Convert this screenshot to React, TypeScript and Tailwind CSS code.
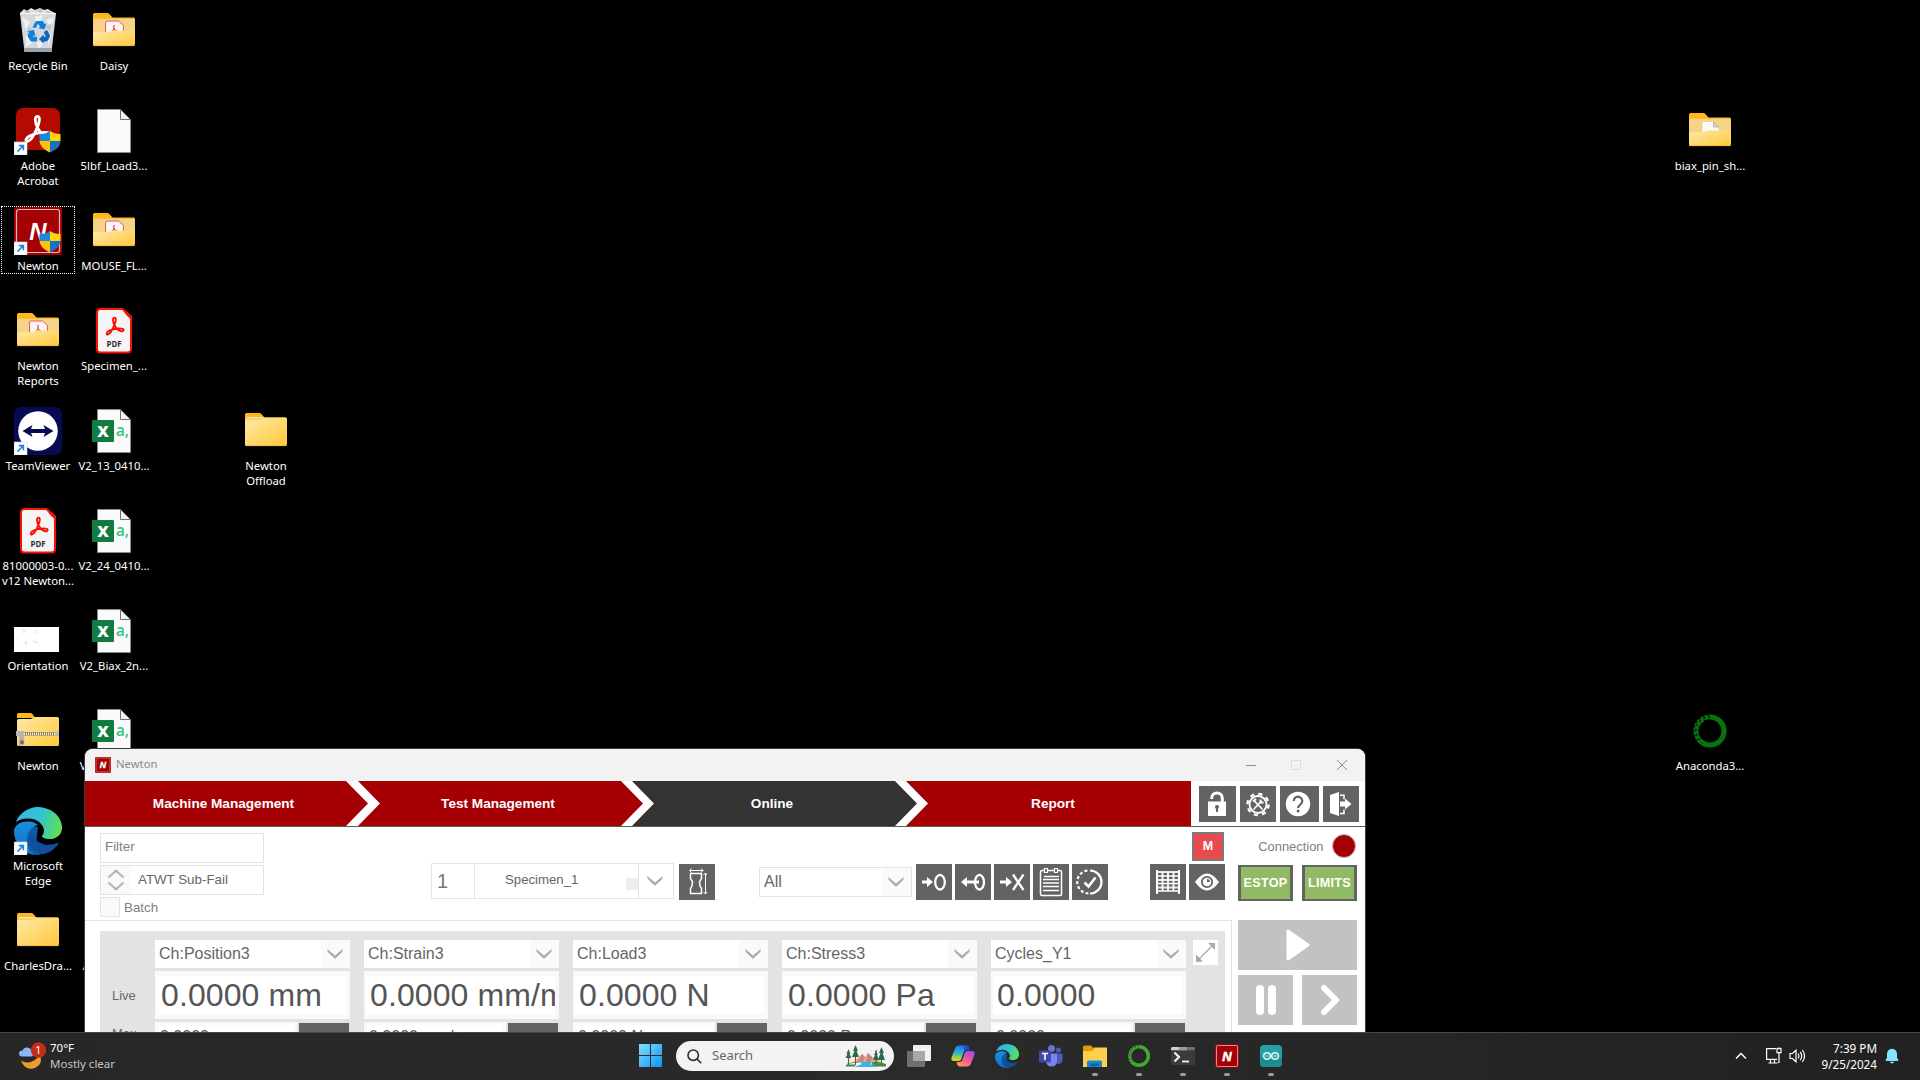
import React, { type ReactNode } from "react";

const UI = "font-['Noto_Sans',sans-serif]";
const ARIAL = "font-['Liberation_Sans',Arial,sans-serif]";

/* ---------- shared marks ---------- */

const ACROBAT =
  "M12 3.5c-2.2 0-1.6 4.3 0 7.3 1.4 2.7 3.8 5.2 6.6 5.7 2.3.3 3.2-2.2.2-2.5-4-.5-8.300.4-11.600 2-3.300 1.600-3.200 4-1.600 3.700 2.200-.5 4.600-4.900 6.100-8.700C13 8.200 14.200 3.500 12 3.500z";

function AcrobatMark({ x, y, size, color, width }: { x: number; y: number; size: number; color: string; width: number }) {
  return (
    <svg x={x} y={y} width={size} height={size} viewBox="2 2 20 20">
      <path d={ACROBAT} fill="none" stroke={color} strokeWidth={width} strokeLinejoin="round" />
    </svg>
  );
}

function Shield() {
  return (
    <g>
      <path d="M36 24c-3 2.300-6.500 3.200-10.500 3v7H36z" fill="#1a8ad8" />
      <path d="M36 24c3 2.300 6.500 3.200 10.500 3v7H36z" fill="#ffd60a" />
      <path d="M25.500 34H36v11.500C30 43 26 39 25.500 34z" fill="#ffc20a" />
      <path d="M46.500 34H36v11.500C42 43 46 39 46.500 34z" fill="#1573c4" />
    </g>
  );
}

function Shortcut() {
  return (
    <g>
      <rect x="0" y="35" width="13" height="13" fill="#fdfdfd" stroke="#cfd6dc" strokeWidth=".6" />
      <path d="M3.500 44.500 9 39M4.800 38.600h4.600v4.600" fill="none" stroke="#1487d9" strokeWidth="1.600" />
    </g>
  );
}

function Box({ children }: { children: ReactNode }) {
  return (
    <svg width="48" height="48" viewBox="0 0 48 48" className="block size-12 shrink-0">
      {children}
    </svg>
  );
}

/* ---------- desktop icons ---------- */

function RecycleBin() {
  return (
    <Box>
      <path d="M6 6 10 2l3 2 4-3 4 2 5-2 4 2 4-1 3 2 4 2-2 6H8z" fill="#dfe3e6" />
      <path d="m10 5 4-2 3 4zm12-2 5 3 2-4zm10 1 5 1-3 4z" fill="#b9c0c5" />
      <path d="M6 6.500h36L37.500 45H10.500z" fill="#d3d8dc" />
      <path d="m8 10 8 5-4 8zm12 0 9-2-4 10zm12 3 8-3-3 12zM12 28l6 8-6 4zm10 6 8 2-5 6zm11-6 4-2-2 14z" fill="#eef1f3" />
      <path d="m14 20 7 4-8 4zm18 0 6-4-2 8z" fill="#bcc4ca" />
      <path d="M6 6.500h36" stroke="#f6f8f9" strokeWidth="1" />
      <path d="M10.200 41h27.600l-.5 4H10.600z" fill="#9aa3aa" />
      <g fill="#0f7fd8">
        <path d="M18.500 20.500 21 15.500q.8-1.500 2.500-1.500h4q1.500 0 2.300 1.400l1 1.800 1.700-1-2 6.300-6.300-1.400 1.900-1.100-2-3.400-2.400 4.400z" />
        <path d="m33 23 2.600 4.600q.8 1.500-.1 3l-1.300 2.400q-.8 1.400-2.400 1.400h-2v2L25 32l4.800-4.400v2.100h2l-2-4.600z" fill="#1167bd" />
        <path d="M23 29.700v4.800h-4.600q-1.600 0-2.500-1.500l-1.700-3q-.8-1.400 0-2.800l1-1.700-1.800-1 6.400-1.600 1.800 6.300-1.800-1-1 1.500z" />
      </g>
    </Box>
  );
}

function FolderBase({ open }: { open?: ReactNode }) {
  return (
    <Box>
      <defs>
        <linearGradient id="fold" x1="0" y1="0" x2="1" y2="1">
          <stop offset="0" stopColor="#ffe9a8" />
          <stop offset="1" stopColor="#ffc83a" />
        </linearGradient>
      </defs>
      <path d="M3 7.500Q3 6 4.500 6h13q1 0 1.800.9L22.500 10.500H43.500q1.500 0 1.500 1.500v14H3z" fill="#fcb81c" />
      {open ? (
        <g>
          <rect x="3.300" y="11.800" width="41.500" height="20" rx="1" fill="#f5d488" />
          {open}
          <path d="M3 26Q3 25 4.500 25h14l4-1.500H43.500q1.500 0 1.500 1V37q0 2-1.500 2H4.500Q3 39 3 37.500z" fill="url(#fold)" />
        </g>
      ) : (
        <g>
          <path d="M4 11.500h15.500l2-1.200H5z" fill="#eef3f8" />
          <path d="M3 14q0-1.500 1.500-1.500h14l3.500-2H43.500q1.500 0 1.500 1.500v25q0 2-1.500 2H4.500Q3 39 3 37.500z" fill="url(#fold)" />
        </g>
      )}
      <path d="M3.500 38.700h41" stroke="#e8ad2e" strokeWidth=".7" />
    </Box>
  );
}

const Folder = () => <FolderBase />;

const PdfFolder = () => (
  <FolderBase
    open={
      <g>
        <path d="M15.500 30V16q0-2 2-2h11l5 4.500V30z" fill="#f6f5f5" stroke="#f2564d" strokeWidth="1" />
        <path d="M24 18v3.500q0 1.500-2 3M24 21.500q.8 2 3 2.500" fill="none" stroke="#e8403a" strokeWidth="1.200" />
      </g>
    }
  />
);

const PageFolder = () => (
  <FolderBase
    open={
      <g>
        <path d="M16.500 30V15h11l5 5v10z" fill="#fafafa" />
        <path d="M27.500 15v5h5z" fill="#d5d5d5" stroke="#888" strokeWidth=".5" />
      </g>
    }
  />
);

function ZipFolder() {
  return (
    <Box>
      <path d="M3 7.500Q3 6 4.500 6h12q1 0 1.800.9L21.500 11H3z" fill="#fcb81c" />
      <path d="M3 13.500q0-1.500 1.500-1.500h12.500l4-2H43.500q1.500 0 1.500 1.500v26q0 1.500-1.500 1.500H4.500Q3 39 3 37.500z" fill="url(#fold)" />
      <path d="M8 26.700h36" stroke="#8b7f60" strokeWidth="3.600" />
      <path d="M8 26.700h36" stroke="#f0ead8" strokeWidth="2.600" strokeDasharray="1 1" />
      <rect x="41" y="24.500" width="4" height="4.500" fill="#b9b9b9" />
      <path d="M2 24h8v5l.5 9.500h-6L5 29H2z" fill="#b4b4b4" />
      <rect x="6.500" y="33.500" width="3" height="3.500" fill="#7a6322" />
    </Box>
  );
}

function AdobeApp() {
  return (
    <Box>
      <rect x="2" y="1" width="44" height="42" rx="7" fill="#b30b00" />
      <AcrobatMark x={8} y={7} size={31} color="#fff" width={1.800} />
      <Shield />
      <Shortcut />
    </Box>
  );
}

function NewtonApp() {
  return (
    <Box>
      <rect width="48" height="48" rx="2.500" fill="#a50003" />
      <rect x="2.500" y="2.500" width="43" height="43" rx="2.500" fill="none" stroke="#e3b9ba" strokeWidth="1.200" />
      <text x="24" y="33" textAnchor="middle" fontFamily="Liberation Sans" fontWeight="700" fontStyle="italic" fontSize="24" fill="#fff">
        N
      </text>
      <Shield />
      <Shortcut />
    </Box>
  );
}

function TeamViewer() {
  return (
    <Box>
      <rect width="48" height="48" rx="6.500" fill="#050a52" />
      <circle cx="24" cy="24" r="19.800" fill="#fff" />
      <path d="m8.500 24 10-6-1.500 4h14l-1.500-4 10 6-10 6 1.500-4H17l1.500 4z" fill="#050a52" />
      <Shortcut />
    </Box>
  );
}

function PdfFile() {
  return (
    <Box>
      <path d="M7 5.500Q7 2 10.500 2h22L41 9.500V42q0 3.500-3.500 3.500h-27Q7 45.500 7 42z" fill="#f6f5f5" stroke="#fa1105" strokeWidth="2" />
      <path d="M32 2h2L41 9v3q-4-2-9-10z" fill="#fa1105" />
      <AcrobatMark x={14} y={9} size={21} color="#fa1105" width={1.800} />
      <text x="24" y="39.500" textAnchor="middle" fontFamily="Open Sans" fontWeight="700" fontSize="8.500" textLength="15" lengthAdjust="spacingAndGlyphs" fill="#2c2c2c">
        PDF
      </text>
    </Box>
  );
}

function Page() {
  return (
    <g>
      <path d="M7.500 2.500H30.500l10 10V45.500h-33z" fill="#fafafa" stroke="#8a8a8a" />
      <path d="M30.500 2.500v10h10z" fill="#f1f1f1" stroke="#6e6e6e" />
    </g>
  );
}

const BlankFile = () => (
  <Box>
    <Page />
  </Box>
);

const CsvFile = () => (
  <Box>
    <Page />
    <rect x="2" y="13" width="22" height="22" rx="1" fill="#107c41" />
    <text x="13" y="30" textAnchor="middle" fontFamily="Open Sans" fontWeight="800" fontSize="16" fill="#fff">
      X
    </text>
    <text x="26" y="29" fontFamily="Open Sans" fontWeight="600" fontSize="17" textLength="13" lengthAdjust="spacingAndGlyphs" fill="#33c481">
      a,
    </text>
  </Box>
);

const Thumbnail = () => (
  <Box>
    <rect x="0" y="20" width="45" height="25" fill="#fff" />
    <path d="m8 22 4 4m0-4-3 4m12-3 3 1m-4 2 2-1" stroke="#d8d4ee" strokeWidth=".8" />
    <path d="m9 36 4-2m-1 4 1-3m6-1 5 2" stroke="#f0c8d0" strokeWidth=".8" />
  </Box>
);

function EdgeMark({ size }: { size: number }) {
  return (
    <svg width={size} height={size} viewBox="0 0 24 24" className="block">
      <defs>
        <linearGradient id="edgeTop" x1="0" y1=".4" x2="1" y2=".6">
          <stop offset="0" stopColor="#36b5ee" />
          <stop offset=".5" stopColor="#2fc5cf" />
          <stop offset="1" stopColor="#65e04f" />
        </linearGradient>
        <linearGradient id="edgeLeft" x1="0" y1="0" x2="0" y2="1">
          <stop offset="0" stopColor="#1b8fd8" />
          <stop offset="1" stopColor="#0f6fd0" />
        </linearGradient>
      </defs>
      <path d="M6 9 12 10l-1 8 5 5-4 1Q6 24 3 19z" fill="#0d5ba8" />
      <path
        fill="#114f9e"
        d="M21.860 17.860q.14 0 .25.12.1.13.1.25t-.11.33l-.32.46-.43.53-.44.5q-.26.25-.38.37l-.22.23q-.58.53-1.340 1.040-.76.51-1.600.91-.86.4-1.740.64t-1.670.24q-.9 0-1.690-.28-.8-.28-1.480-.78-.68-.5-1.220-1.170-.53-.66-.92-1.440-.38-.77-.58-1.600-.2-.83-.2-1.670 0-1 .32-1.960.33-.97.87-1.800.14.95.55 1.770.41.82 1.020 1.500.6.68 1.380 1.210.78.54 1.640.9.86.36 1.770.56.92.2 1.800.2 1.120 0 2.180-.24 1.060-.23 2.060-.72l.2-.1.2-.05z"
      />
      <path
        fill="url(#edgeLeft)"
        d="M6.360 16.590q0 1.100.27 2.150.27 1.060.78 2.030.51.96 1.240 1.770.74.82 1.660 1.400-1.470-.2-2.800-.74-1.330-.55-2.480-1.370-1.150-.83-2.080-1.900-.92-1.070-1.580-2.330T.36 14.940Q0 13.540 0 12.060q0-.81.32-1.490.31-.68.83-1.230.53-.55 1.200-.96.66-.4 1.350-.66.74-.27 1.500-.39.78-.12 1.550-.12.7 0 1.420.1.72.12 1.400.35.68.23 1.320.57.63.35 1.160.83-.35 0-.7.07-.33.07-.65.23v-.02q-.63.28-1.200.74-.57.46-1.050 1.040-.48.58-.87 1.260-.38.67-.65 1.390-.27.71-.42 1.440-.15.72-.15 1.380z"
      />
      <path
        fill="url(#edgeTop)"
        d="M11.960.06q1.700 0 3.330.39 1.630.38 3.070 1.150 1.430.77 2.620 1.930 1.180 1.160 1.980 2.700.49.94.76 1.960.28 1 .28 2.080 0 .89-.23 1.700-.24.8-.69 1.480-.45.68-1.100 1.220-.64.53-1.450.88-.54.24-1.110.36-.58.13-1.160.13-.42 0-.97-.03-.54-.03-1.100-.12-.55-.1-1.050-.28-.5-.19-.84-.5-.12-.09-.23-.24-.1-.16-.1-.33 0-.15.16-.35.16-.2.35-.5.2-.28.36-.68.16-.4.16-.95 0-1.060-.4-1.960-.4-.91-1.060-1.640-.66-.74-1.520-1.280-.86-.55-1.790-.89-.84-.3-1.720-.44-.87-.14-1.760-.14-1.550 0-3.060.45T.94 7.550q.71-1.740 1.810-3.130 1.100-1.380 2.520-2.350Q6.680 1.100 8.370.58q1.700-.52 3.580-.52Z"
      />
    </svg>
  );
}

const EdgeApp = () => (
  <div className="relative size-12 shrink-0">
    <EdgeMark size={48} />
    <div className="absolute inset-0">
      <Box>
        <Shortcut />
      </Box>
    </div>
  </div>
);

function AnacondaRing({ color, back }: { color: string; back: string }) {
  return (
    <g>
      <circle cx="24" cy="24" r="14" fill="none" stroke={color} strokeWidth="5.200" />
      <path d="M24 10A14 14 0 0 0 14 34" fill="none" stroke={back} strokeWidth="1.200" strokeDasharray="1.800 3.200" />
      <path d="M23 7.500A17 17 0 0 0 12 36" fill="none" stroke={back} strokeWidth="1.800" strokeDasharray="1.800 3" />
      <path d="M23 12.500A11.800 11.800 0 0 0 15.500 32" fill="none" stroke={back} strokeWidth="1.200" strokeDasharray="1.400 2.600" />
    </g>
  );
}

const Anaconda = () => (
  <Box>
    <AnacondaRing color="#08730c" back="#000" />
  </Box>
);

type DesktopItem = { col: number; row: number; label: string[]; icon: () => React.JSX.Element; selected?: boolean };

const DESKTOP: DesktopItem[] = [
  { col: 1, row: 1, label: ["Recycle Bin"], icon: RecycleBin },
  { col: 1, row: 2, label: ["Adobe", "Acrobat"], icon: AdobeApp },
  { col: 1, row: 3, label: ["Newton"], icon: NewtonApp, selected: true },
  { col: 1, row: 4, label: ["Newton", "Reports"], icon: PdfFolder },
  { col: 1, row: 5, label: ["TeamViewer"], icon: TeamViewer },
  { col: 1, row: 6, label: ["81000003-0...", "v12 Newton..."], icon: PdfFile },
  { col: 1, row: 7, label: ["Orientation"], icon: Thumbnail },
  { col: 1, row: 8, label: ["Newton"], icon: ZipFolder },
  { col: 1, row: 9, label: ["Microsoft", "Edge"], icon: EdgeApp },
  { col: 1, row: 10, label: ["CharlesDra..."], icon: Folder },
  { col: 2, row: 1, label: ["Daisy"], icon: PdfFolder },
  { col: 2, row: 2, label: ["5lbf_Load3..."], icon: BlankFile },
  { col: 2, row: 3, label: ["MOUSE_FL..."], icon: PdfFolder },
  { col: 2, row: 4, label: ["Specimen_..."], icon: PdfFile },
  { col: 2, row: 5, label: ["V2_13_0410..."], icon: CsvFile },
  { col: 2, row: 6, label: ["V2_24_0410..."], icon: CsvFile },
  { col: 2, row: 7, label: ["V2_Biax_2n..."], icon: CsvFile },
  { col: 2, row: 8, label: ["V2_Biax_2n..."], icon: CsvFile },
  { col: 2, row: 10, label: ["ATWT_Dra..."], icon: Folder },
  { col: 4, row: 5, label: ["Newton", "Offload"], icon: Folder },
  { col: 23, row: 2, label: ["biax_pin_sh..."], icon: PageFolder },
  { col: 23, row: 8, label: ["Anaconda3..."], icon: Anaconda },
];

function Desktop() {
  return (
    <div className={`grid grid-cols-[repeat(25,76px)] grid-rows-[repeat(10,100px)] text-[11.3px] leading-[15px] text-white ${UI}`}>
      {DESKTOP.map(({ col, row, label, icon: Icon, selected }) => (
        <div key={`${col}-${row}`} className="flex flex-col items-center px-px pt-1.5" style={{ gridColumn: col, gridRow: row }}>
          <div
            className={
              selected
                ? "flex h-[68px] w-full flex-col items-center border border-dotted border-white"
                : "flex h-[68px] w-full flex-col items-center pt-px"
            }
          >
            <Icon />
            <div className="mt-[3px] flex flex-col items-center whitespace-nowrap">
              {label.map((line) => (
                <span key={line}>{line}</span>
              ))}
            </div>
          </div>
        </div>
      ))}
    </div>
  );
}

/* ---------- Newton window ---------- */

const Chevron = () => (
  <svg width="16" height="10" viewBox="0 0 16 10" className="mr-0.5">
    <path d="M.5.500 8 6.800 15.500.500 15 3 8 9.500 1 3z" fill="#a9a9a9" stroke="#a9a9a9" strokeWidth=".5" />
  </svg>
);

function ToolButton({ children, className = "w-9" }: { children: ReactNode; className?: string }) {
  return <button className={`flex h-9 shrink-0 items-center bg-[#636363] ${className}`}>{children}</button>;
}

function Glyph({ children }: { children: ReactNode }) {
  return (
    <svg width="36" height="36" viewBox="0 0 36 36" fill="none" stroke="#fff" className="block shrink-0">
      {children}
    </svg>
  );
}

function NavBar() {
  return (
    <div className="flex h-[46px] border-b border-[#5a5a5a]">
      <div className={`relative flex h-[45px] w-[1106px] bg-[#a50003] text-[13.6px] font-bold text-white ${ARIAL}`}>
        <svg className="absolute inset-0" width="1106" height="45">
          <path d="M547 0H821L843 22.500 821 45H547L569 22.500z" fill="#333" />
          <path d="M261 0h12l22 22.500L273 45H261l22-22.500zM536 0h11l22 22.500L547 45H536l22-22.500zM810 0h11l22 22.500L821 45H810l22-22.500z" fill="#fff" />
        </svg>
        <div className="relative flex items-center pt-px text-center">
          <span className="w-[277px]">Machine Management</span>
          <span className="w-[272px]">Test Management</span>
          <span className="w-[276px]">Online</span>
          <span className="w-[286px]">Report</span>
        </div>
      </div>
      <div className="flex pl-2 pt-[5px]">
        <ToolButton className="mr-1 w-[37px]">
          <Glyph>
            <path d="M9 15.500h18V30H9z" fill="#fff" stroke="none" />
            <path d="M12.700 13v-1a5.300 5 0 0 1 10.600 0v4" strokeWidth="3" />
            <circle cx="18" cy="21" r="2" fill="#636363" stroke="none" />
            <path d="M18 21v5" stroke="#636363" strokeWidth="2" />
          </Glyph>
        </ToolButton>
        <ToolButton className="mr-1 w-9">
          <Glyph>
            <circle cx="18" cy="18.500" r="8.500" strokeWidth="1.800" />
            <circle cx="18" cy="18.500" r="10.600" strokeWidth="2.400" strokeDasharray="4.160 4.160" />
            <path d="m13.500 23.500 8-8.500M22.500 23.500l-8-8.500" strokeWidth="1.700" />
            <path d="m13 15.500 3-2.500M20.500 13.500v3h3" strokeWidth="2" />
          </Glyph>
        </ToolButton>
        <ToolButton className="mr-1 w-[39px]">
          <Glyph>
            <circle cx="18" cy="18" r="12.200" fill="#fff" stroke="none" />
            <path d="M13.700 15a4.300 4.300 0 1 1 6.600 3.600q-2.200 1.400-2.200 3.400" stroke="#636363" strokeWidth="2.200" />
            <circle cx="18.100" cy="25" r="1.500" fill="#636363" stroke="none" />
          </Glyph>
        </ToolButton>
        <ToolButton>
          <Glyph>
            <path d="M7 9l9-3v24l-9-3z" fill="#fff" stroke="none" />
            <path d="M17 9.200h4v4M17 27.500h4v-4" strokeWidth="1.500" />
            <path d="M17 15.500h5v-3l6.500 5.500-6.500 5.500v-3h-5z" fill="#fff" stroke="none" />
          </Glyph>
        </ToolButton>
      </div>
    </div>
  );
}

function Toolbar() {
  return (
    <div className="flex h-[93px] items-start pl-[15px] text-[13.330px] text-[#6f6f6f]">
      <div className="mt-1.5 flex w-[164px] flex-col gap-0.5">
        <div className="flex h-[30px] items-center border border-[#e2e2e2] pb-0.5 pl-1 text-[#808080]">Filter</div>
        <div className="flex h-[30px] items-center border border-[#e2e2e2]">
          <div className="flex h-full w-[30px] items-center justify-center bg-[#fafafa]">
            <svg width="18" height="22" viewBox="0 0 18 22" fill="none" stroke="#b4b4b4" strokeWidth="2.200">
              <path d="M1.500 8.500 9 1.800l7.500 6.700M1.500 13.500 9 20.200l7.500-6.700" />
            </svg>
          </div>
          <span className="ml-[7px] text-[#666]">ATWT Sub-Fail</span>
        </div>
        <div className="flex h-5 items-center">
          <div className="mr-1 size-5 border border-[#e2e2e2] bg-[#fafafa]" />
          <span className="pt-px text-[#808080]">Batch</span>
        </div>
      </div>

      <div className="ml-[167px] mt-9 flex h-9 w-[243px] border border-[#e5e5e5]">
        <div className="flex w-[43px] items-center border-r border-[#e2e2e2] pl-[5px] text-xl text-[#777]">1</div>
        <div className="flex w-[164px] border-r border-[#e5e5e5]">
          <span className="w-[151px] pl-[30px] pt-1.5 text-[13.200px] text-[#666]">Specimen_1</span>
          <div className="mt-3.5 size-3 bg-[#eee]" />
        </div>
        <div className="flex grow items-center justify-center">
          <Chevron />
        </div>
      </div>
      <div className="ml-[5px] mt-[37px]">
        <ToolButton>
          <Glyph>
            <path d="M11.500 9.500h11v5q-4 4.500 0 10v5h-11v-5q4-5.500 0-10z" strokeWidth="1.500" />
            <path d="M11 6.500h13M12.500 4.500l-2 2 2 2M22 4.500l2 2-2 2M26.500 9v21M24.500 11l2-2 1.500 2M24.500 28l2 2 1.500-2" strokeWidth="1" />
          </Glyph>
        </ToolButton>
      </div>

      <div className="ml-11 mt-10 flex h-[30px] w-[153px] items-center border border-[#e2e2e2]">
        <span className="w-[122px] pl-1 text-base text-[#666]">All</span>
        <div className="flex h-full grow items-center justify-center bg-[#fafafa]">
          <Chevron />
        </div>
      </div>
      <div className="ml-1 mt-[37px] flex gap-[3px]">
        <ToolButton>
          <Glyph>
            <path d="M6 16.500h5v-3.500l6 5-6 5v-3.500H6z" fill="#fff" stroke="none" />
            <ellipse cx="24" cy="18.200" rx="4.800" ry="7.300" strokeWidth="2.300" />
          </Glyph>
        </ToolButton>
        <ToolButton>
          <Glyph>
            <ellipse cx="24.500" cy="18.200" rx="4.500" ry="7.300" strokeWidth="2.300" />
            <path d="M24 16.500H12v-3.500L6 18l6 5v-3.500h12z" fill="#fff" stroke="none" />
          </Glyph>
        </ToolButton>
        <ToolButton>
          <Glyph>
            <path d="M6 16.500h6v-3.500l6 5-6 5v-3.500H6z" fill="#fff" stroke="none" />
            <path d="m19 10.500 10.500 15.500M29.500 10.500 19 26" strokeWidth="2.300" />
          </Glyph>
        </ToolButton>
        <ToolButton>
          <Glyph>
            <rect x="7.500" y="6.500" width="21" height="25" rx="1.500" strokeWidth="1.500" />
            <path d="M11 12.500h15M10 15.500h16M10 19h16M10 22.500h16M10 26.500h16" strokeWidth="1.500" />
            <path d="M11.500 4.500h3v4h-3zM21.500 4.500h3v4h-3z" strokeWidth="1.200" fill="#636363" />
          </Glyph>
        </ToolButton>
        <ToolButton>
          <Glyph>
            <path d="M18 6.500a11.500 11.500 0 0 1 0 23" strokeWidth="2.200" />
            <path d="M16.500 29.500A11.500 11.500 0 0 1 17 6.500" strokeWidth="2.200" strokeDasharray="3 2.200" />
            <path d="m12.500 18.500 4 4 7-9" strokeWidth="2.500" />
          </Glyph>
        </ToolButton>
      </div>

      <div className="ml-[42px] mt-[5px] flex w-[75px] flex-col items-end">
        <div className="mr-px flex h-[29px] w-8 items-center justify-center border-2 border-[#7b7b7b] bg-[#e84a50] text-[12.500px] font-bold text-white">M</div>
        <div className="mt-[3px] flex gap-[3px]">
          <ToolButton>
            <Glyph>
              <path d="M7 6v24M29 6v24" strokeWidth="2" />
              <path d="M7 12h22M7 19.500h22M7 27h22" strokeWidth="1.500" />
              <path d="M12.500 8v19M18 8v19M23.500 8v19" strokeWidth="2" opacity=".9" />
              <path d="M8 8h20M8 16h20M8 23.500h20" strokeWidth="2.200" opacity=".85" />
            </Glyph>
          </ToolButton>
          <ToolButton>
            <Glyph>
              <path d="M6 18q12-17 24 0-12 17-24 0z" fill="#fff" stroke="none" />
              <circle cx="18" cy="18" r="5.200" stroke="#636363" strokeWidth="1.800" />
              <path d="M18 18v-3a3 3 0 0 1 3 3z" fill="#636363" stroke="none" />
            </Glyph>
          </ToolButton>
        </div>
      </div>
    </div>
  );
}

const CHANNELS = [
  { name: "Ch:Position3", live: "0.0000 mm", max: "0.0000" },
  { name: "Ch:Strain3", live: "0.0000 mm/mm", max: "0.0000 mm/mm" },
  { name: "Ch:Load3", live: "0.0000 N", max: "0.0000 N" },
  { name: "Ch:Stress3", live: "0.0000 Pa", max: "0.0000 Pa" },
  { name: "Cycles_Y1", live: "0.0000", max: "0.0000" },
];

function Readouts() {
  return (
    <div className="ml-[15px] mt-2.5 flex h-[120px] w-[1125px] bg-[#e3e3e3] pt-[9px]">
      <div className="flex w-[55px] flex-col pl-3 text-[13px] leading-4 text-[#666]">
        <span className="mt-12">Live</span>
        <span className="mt-[22px]">Max</span>
      </div>
      <div className="flex gap-3.5">
        {CHANNELS.map((c) => (
          <div key={c.name} className="flex w-[195px] flex-col gap-[3px]">
            <div className="flex h-7 items-center bg-white">
              <span className="w-[166px] pl-1 pt-px text-base text-[#666]">{c.name}</span>
              <div className="flex h-full grow items-center justify-center bg-[#fafafa]">
                <Chevron />
              </div>
            </div>
            <div className="h-12 bg-[#f9f9f9] px-0.5 py-[5px]">
              <div className="mr-0.5 h-[38px] overflow-hidden whitespace-nowrap bg-white pl-1 text-[32px] leading-[38px] tracking-[.1px] text-[#555]">
                {c.live}
              </div>
            </div>
            <div className="flex h-[30px] justify-between">
              <div className="w-[142px] overflow-hidden whitespace-nowrap border-[3px] border-[#fafafa] bg-white pl-0.5 pt-[3px] text-base leading-[18px] text-[#555]">
                {c.max}
              </div>
              <div className="mr-px mt-px w-[50px] bg-[#636363]" />
            </div>
          </div>
        ))}
      </div>
      <div className="ml-[7px] size-[25px] bg-white">
        <svg width="25" height="25" viewBox="0 0 25 25" fill="none" stroke="#aaa" strokeWidth="1.200">
          <path d="M4 21 21 4" />
          <path d="m3 14.500 7 7L3 22zM15 3h7v7z" fill="#aaa" stroke="none" />
        </svg>
      </div>
    </div>
  );
}

function Controls() {
  return (
    <div className="flex w-[119px] flex-col">
      <div className="flex h-[38px] items-center justify-end text-[12.900px] text-[#808080]">
        <span className="pt-px">Connection</span>
        <div className="ml-2 mr-[1.500px] size-6 rounded-full border-[1.500px] border-[#c4c4c4] bg-[#a50003]" />
      </div>
      <div className="flex justify-between text-[12.600px] font-bold tracking-[.3px] text-white">
        <div className="flex h-9 w-[55px] items-center justify-center border-[3px] border-b-2 border-t-2 border-[#636363] bg-[#92b964]">ESTOP</div>
        <div className="flex h-9 w-[55px] items-center justify-center border-[3px] border-b-2 border-t-2 border-[#636363] bg-[#92b964]">LIMITS</div>
      </div>
      <div className="mt-[19px] flex h-[50px] items-center justify-center bg-[#c2c2c2]">
        <svg width="24" height="32" viewBox="0 0 24 32">
          <path d="M2 2v28L22 16z" fill="#fff" stroke="#fff" strokeWidth="3" strokeLinejoin="round" />
        </svg>
      </div>
      <div className="mt-[5px] flex justify-between">
        <div className="flex h-[50px] w-[55px] items-center justify-center gap-1 bg-[#c2c2c2]">
          <div className="h-[30px] w-2 rounded-[4px] bg-white" />
          <div className="h-[30px] w-2 rounded-[4px] bg-white" />
        </div>
        <div className="flex h-[50px] w-[55px] items-center justify-center bg-[#c2c2c2]">
          <svg width="20" height="32" viewBox="0 0 20 32">
            <path d="M4 4l12 12L4 28" fill="none" stroke="#fff" strokeWidth="6" strokeLinecap="round" strokeLinejoin="round" />
          </svg>
        </div>
      </div>
    </div>
  );
}

function SmallN({ size }: { size: number }) {
  return (
    <svg width={size} height={size} viewBox="0 0 24 24" className="block">
      <rect width="24" height="24" rx="2" fill="#a50003" />
      <rect x="1.500" y="1.500" width="21" height="21" rx="1.500" fill="none" stroke="#d98b8c" strokeWidth="1.100" />
      <text x="12" y="16.500" textAnchor="middle" fontFamily="Liberation Sans" fontWeight="700" fontStyle="italic" fontSize="13" fill="#fff" stroke="#fff" strokeWidth=".5">
        N
      </text>
    </svg>
  );
}

function NewtonWindow() {
  return (
    <div className={`absolute left-[85px] top-[749px] h-[300px] w-[1280px] overflow-hidden rounded-t-lg bg-white shadow-[0_0_0_1px_#3c3c3c] ${ARIAL}`}>
      <div className="flex h-8 items-center bg-[#f2f2f2] pb-px pl-2.5">
        <SmallN size={16} />
        <span className={`ml-[5px] text-[11.300px] text-[#8b8b8b] ${UI}`}>Newton</span>
        <svg className="ml-auto mr-[17px]" width="102" height="12" viewBox="0 0 102 12" fill="none">
          <path d="M0 6.500h10" stroke="#8c8c8c" />
          <rect x="45.500" y="1.500" width="9" height="9" rx="1" stroke="#dadada" />
          <path d="m91 1 10 10M101 1 91 11" stroke="#8c8c8c" />
        </svg>
      </div>
      <NavBar />
      <div className="flex">
        <div className="w-[1147px]">
          <Toolbar />
          <div className="h-[130px] border-r border-t border-[#e2e2e2]">
            <Readouts />
          </div>
        </div>
        <div className="ml-1.5">
          <Controls />
        </div>
      </div>
    </div>
  );
}

/* ---------- taskbar ---------- */

function SearchArt() {
  return (
    <svg width="42" height="22" viewBox="0 0 42 22">
      <path d="M9 17 17 9l3 3 3-4 5 5 3-2 4 6z" fill="#e0aaa0" />
      <path d="m17 9 3 3-2 5h-6zM23 8l5 5-3 4h-4z" fill="#c9857c" />
      <path d="M1 19q8-3 16-2M26 17q8-1 15 2v2H28" fill="#3f9b4f" />
      <path d="M15 17h12l-2 2 8 3H9l8-3z" fill="#35b6e6" />
      <path d="M3.500 6v14M10.500 2v18M31 5v14M36.500 4v16" stroke="#8a4a2b" strokeWidth="1.200" />
      <path d="m3.500 4-2 5h1l-2 4h6l-2-4h1zM10.500 0 8 6h1.500L7 12h7l-2.500-6H13zM31 6l-2 4h1l-2 5h6l-2-5h1zM36.500 2 34 8h1.500L33 15h7l-2.500-7H39z" fill="#2b6b4b" />
      <path d="M1 20.500h9M31 20.500h10" stroke="#3d8a45" strokeWidth="1.800" />
    </svg>
  );
}

function Mini({ children, size = 24 }: { children: ReactNode; size?: number }) {
  return (
    <svg width={size} height={size} viewBox="0 0 24 24" className="block">
      {children}
    </svg>
  );
}

const StartIcon = () => (
  <Mini>
    <defs>
      <linearGradient id="win" x1="0" y1="0" x2="1" y2="1">
        <stop offset="0" stopColor="#7fe0fb" />
        <stop offset="1" stopColor="#0f93f5" />
      </linearGradient>
    </defs>
    <path d="M0 0h11v11H0zM12 0h11v11H12zM0 12h11v11H0zM12 12h11v11H12z" fill="url(#win)" />
  </Mini>
);

const TaskView = () => (
  <Mini>
    <rect x="6" y="1" width="18" height="16" rx="1" fill="#f1f1f1" />
    <rect x="0" y="7" width="18" height="16" rx="1" fill="#6f6f6f" />
    <rect x="6" y="7" width="12" height="10" fill="#a8a8a8" />
  </Mini>
);

const Copilot = () => (
  <Mini>
    <defs>
      <linearGradient id="cpA" x1=".3" y1="0" x2=".2" y2="1">
        <stop offset="0" stopColor="#1b7df0" />
        <stop offset=".5" stopColor="#2cb6c8" />
        <stop offset=".75" stopColor="#8fd83a" />
        <stop offset="1" stopColor="#f7c928" />
      </linearGradient>
      <linearGradient id="cpB" x1=".8" y1="0" x2=".2" y2="1">
        <stop offset="0" stopColor="#a04af0" />
        <stop offset=".5" stopColor="#f0559a" />
        <stop offset="1" stopColor="#ff9a4a" />
      </linearGradient>
    </defs>
    <path d="M8 1.500h7.500q1.700 0 2.200 1.700L18.500 6h-3.200q-2 0-2.600 2L10.300 15q-.6 2-2.600 2H2.500Q-.3 17 .5 13.500L4 4.500Q5 1.500 8 1.500z" fill="url(#cpA)" />
    <path d="M15.500 1.500q1.700 0 2.200 1.700L18.500 6h-3.200q-1.300 0-2 .8L12 1.500z" fill="#1a4fd0" />
    <path d="M16 22.500H8.500q-1.700 0-2.200-1.700L5.500 18h3.200q2 0 2.600-2L13.700 9q.6-2 2.600-2h5.200q2.800 0 2 3.500L20 19.500q-1 3-4 3z" fill="url(#cpB)" />
  </Mini>
);

const Teams = () => (
  <Mini>
    <circle cx="12.500" cy="4.500" r="3.500" fill="#6a72d8" />
    <circle cx="19.500" cy="6" r="2.600" fill="#5159bd" />
    <path d="M16 9.500h7.500v6q0 4-4 4.500-3 0-3.500-2z" fill="#4f57b9" />
    <path d="M7 9.500h11v7q0 6-5.500 6T7 16.500z" fill="#7a83ea" />
    <rect x="0" y="6.500" width="12" height="12" rx="1" fill="#4349a8" />
    <path d="M3 9.500h6M6 9.500V16" stroke="#fff" strokeWidth="1.600" />
  </Mini>
);

const Explorer = () => (
  <Mini>
    <path d="M0 3q0-1.500 1.500-1.500H8l2.500 2.500H24v8H0z" fill="#e09b0c" />
    <path d="M0 7h9l2-1.800V3.500h13V23H0z" fill="#ffd04f" />
    <path d="M4 23v-5q0-1.500 1.500-1.500h12q1.500 0 1.500 1.500v5z" fill="#1b86d6" />
    <path d="M7 19.500h9V22H7z" fill="#0f62a8" />
  </Mini>
);

const AnacondaSmall = () => (
  <svg width="24" height="24" viewBox="6 6 36 36" className="block">
    <AnacondaRing color="#3fab2f" back="#272727" />
  </svg>
);

const Terminal = () => (
  <Mini>
    <rect x="0" y="3" width="24" height="18" rx="1.500" fill="#3b3b3b" />
    <path d="M0 6.200V4.500Q0 3 1.500 3H16v3.200z" fill="#cfcfcf" />
    <path d="M8 3h8v3.200H8z" fill="#9a9a9a" />
    <path d="M16 3h6.500Q24 3 24 4.500v1.700h-8z" fill="#707070" />
    <path d="m3.500 8.500 4.500 4.500-4.500 4.500" fill="none" stroke="#f2f2f2" strokeWidth="2.200" />
    <path d="M11 17.500h7" stroke="#f2f2f2" strokeWidth="1.800" />
  </Mini>
);

const Arduino = () => (
  <Mini>
    <rect x="1" y="1" width="22" height="22" rx="4" fill="#27a0a5" />
    <path d="M1 14v5q0 4 4 4h14q4 0 4-4v-5z" fill="#1c8c92" />
    <g fill="none" stroke="#d9f2f2" strokeWidth="1.600">
      <circle cx="8" cy="12" r="3.300" />
      <circle cx="16" cy="12" r="3.300" />
    </g>
    <path d="M6.800 12h2.400M14.800 12h2.400M16 10.800v2.400" stroke="#d9f2f2" strokeWidth=".8" />
  </Mini>
);

const PINNED: { name: string; icon: ReactNode; running?: boolean }[] = [
  { name: "task-view", icon: <TaskView /> },
  { name: "copilot", icon: <Copilot /> },
  { name: "edge", icon: <EdgeMark size={24} /> },
  { name: "teams", icon: <Teams /> },
  { name: "explorer", icon: <Explorer />, running: true },
  { name: "anaconda", icon: <AnacondaSmall />, running: true },
  { name: "terminal", icon: <Terminal />, running: true },
  { name: "newton", icon: <SmallN size={24} />, running: true },
  { name: "arduino", icon: <Arduino />, running: true },
];

function Taskbar() {
  return (
    <div className={`absolute inset-x-0 bottom-0 flex h-12 border-t border-[#474747] bg-[linear-gradient(90deg,#272727,#2a2a2a_50%,#212121)] text-white ${UI}`}>
      <div className="flex w-[639px] items-center pb-0.5 pl-[18px]">
        <svg width="30" height="28" viewBox="0 0 30 28">
          <path d="M3 18.500q5 3.500 11 1 5-2 7-6.500 4 5 0 10-4 4.500-10 3.500-6-1.500-8-8z" fill="#f39a2c" />
          <path d="M4.500 14.500q-3.500 0-3.500-3t3.500-3Q6 5 9.500 5.500 14 6.500 14 10q3 2 0 4.500z" fill="#8fb4f5" />
          <circle cx="20.500" cy="8" r="7.700" fill="#c42b1c" />
          <text x="20.300" y="11.800" textAnchor="middle" fontSize="10.500" fill="#fff">
            1
          </text>
        </svg>
        <div className="ml-0.5 flex flex-col text-[11.500px] leading-4">
          <span>70°F</span>
          <span className="text-[#c4c4c4]">Mostly clear</span>
        </div>
      </div>
      <div className="flex items-center pb-px">
        <StartIcon />
        <div className="ml-[13px] flex h-[30px] w-[218px] items-center rounded-full bg-[#f3f3f3] pl-[11px] pr-[7px]">
          <svg width="15" height="15" viewBox="0 0 15 15" fill="none" stroke="#2e2e2e" strokeWidth="1.600">
            <circle cx="6.200" cy="6.200" r="5.200" />
            <path d="m10 10 4.300 4.300" />
          </svg>
          <span className="ml-2.5 text-[13px] text-[#666]">Search</span>
          <div className="ml-auto">
            <SearchArt />
          </div>
        </div>
        <div className="ml-[3px] flex h-full">
          {PINNED.map((p) => (
            <div key={p.name} className="flex w-11 flex-col items-center pt-[11px]">
              {p.icon}
              {p.running && <div className="mt-[5px] h-[3px] w-1.5 rounded-full bg-[#9c9c9c]" />}
            </div>
          ))}
        </div>
      </div>
      <div className="ml-auto flex items-center pb-0.5 pr-[21px]">
        <svg width="12" height="8" viewBox="0 0 12 8" fill="none" stroke="#fff" strokeWidth="1.500">
          <path d="m1 6.500 5-5 5 5" />
        </svg>
        <svg className="ml-[18px]" width="17" height="18" viewBox="0 0 17 18" fill="none" stroke="#fff" strokeWidth="1.200">
          <path d="M11 1.700H1.600v10.600h10.500M5.500 12.500v3.500M9.500 12.500V16M3.500 16h9" />
          <path d="M12 1.600h4v4h-4zM13 .5v1M15 .5v1M14 6v9.500h-1" />
        </svg>
        <svg className="ml-[7px]" width="17" height="16" viewBox="0 0 17 16" fill="none" stroke="#fff" strokeWidth="1.200">
          <path d="M1 5.500h2.500L7 2.200v11.600l-3.500-3.300H1z" />
          <path d="M9 5.500q1.700 2.500 0 5M11.200 3.800q3 4.200 0 8.400M13.300 2q4.500 6 0 12" />
        </svg>
        <div className="ml-[9px] flex w-[62px] flex-col items-end whitespace-nowrap text-[11.700px] leading-4">
          <span>7:39 PM</span>
          <span>9/25/2024</span>
        </div>
        <svg className="ml-2" width="14" height="16" viewBox="0 0 14 16" fill="#86e3ff">
          <path d="M7 .8q4.800.3 5 5.200v3.500l1.500 2.700q0 .8-.8.800H1.300q-.8 0-.8-.8L2 9.500V6Q2.200 1.100 7 .8zM4.800 13.800h4.400Q8.700 15.500 7 15.500t-2.200-1.700z" />
        </svg>
      </div>
    </div>
  );
}

export default function App() {
  return (
    <div className="relative h-[1080px] w-[1920px] overflow-hidden bg-black">
      <Desktop />
      <NewtonWindow />
      <Taskbar />
    </div>
  );
}
